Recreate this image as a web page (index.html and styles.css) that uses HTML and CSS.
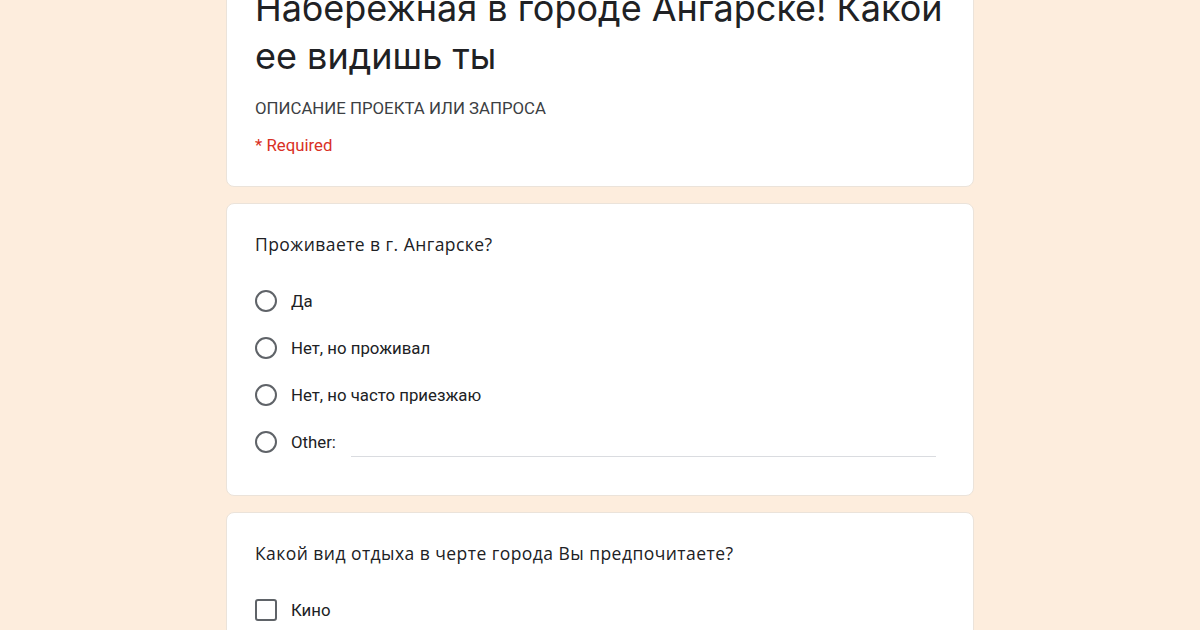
FILE: index.html
```html
<!DOCTYPE html>
<html lang="ru">
<head>
  <meta charset="UTF-8" />
  <meta name="viewport" content="width=device-width, initial-scale=1" />
  <title>Набережная в городе Ангарске</title>
  <link rel="stylesheet" href="styles.css">
</head>
<body>
  <div class="form">

    <!-- Header card -->
    <div class="card header-card">
      <h1 class="form-title">Набережная в городе Ангарске! Какой ее видишь ты</h1>
      <div class="form-desc">ОПИСАНИЕ ПРОЕКТА ИЛИ ЗАПРОСА</div>
      <div class="required-note">* Required</div>
    </div>

    <!-- Question 1 -->
    <div class="card question">
      <div class="question-title">Проживаете в г. Ангарске?</div>
      <div class="options">
        <label class="option">
          <span class="radio"></span>
          <span class="option-label">Да</span>
        </label>
        <label class="option">
          <span class="radio"></span>
          <span class="option-label">Нет, но проживал</span>
        </label>
        <label class="option">
          <span class="radio"></span>
          <span class="option-label">Нет, но часто приезжаю</span>
        </label>
        <label class="option">
          <span class="radio"></span>
          <span class="option-label">Other:</span>
          <span class="other-input"></span>
        </label>
      </div>
    </div>

    <!-- Question 2 -->
    <div class="card question">
      <div class="question-title">Какой вид отдыха в черте города Вы предпочитаете?</div>
      <div class="options">
        <label class="option">
          <span class="checkbox"></span>
          <span class="option-label">Кино</span>
        </label>
      </div>
    </div>

  </div>
</body>
</html>
```

FILE: styles.css
```css
body {
  background-color: #fdeddd;
  margin: 0;
  padding: 0;
  font-family: 'Roboto', 'Liberation Sans', sans-serif;
  color: #202124;
  overflow: hidden;
  height: 630px;
}

.form {
  width: 748px;
  margin: -45px auto 0 auto;
  display: flex;
  flex-direction: column;
  gap: 16px;
}

.card {
  background: #fff;
  border: 1px solid #ebe3da;
  border-radius: 8px;
  padding: 28px;
  box-sizing: border-box;
}

.header-card {
  padding-bottom: 29px;
}

.form-title {
  font-family: 'Inter', 'Open Sans', sans-serif;
  font-weight: 400;
  font-size: 36px;
  line-height: 48px;
  margin: 0;
  color: #202124;
}

.form-desc {
  margin-top: 16px;
  font-size: 16.8px;
  line-height: 24px;
  color: #3c4043;
}

.required-note {
  margin-top: 13px;
  font-size: 16.8px;
  line-height: 24px;
  color: #d93025;
}

.question {
  padding-top: 26px;
  padding-bottom: 33px;
}

.question-title {
  font-family: 'Open Sans', 'Roboto', sans-serif;
  font-size: 17.5px;
  line-height: 28px;
  letter-spacing: 0.45px;
}

.options {
  margin-top: 23px;
  display: flex;
  flex-direction: column;
  gap: 7px;
}

.option {
  display: flex;
  align-items: center;
  height: 40px;
  font-size: 16.8px;
}

.radio {
  width: 22px;
  height: 22px;
  border: 2px solid #5f6368;
  border-radius: 50%;
  box-sizing: border-box;
  flex-shrink: 0;
}

.checkbox {
  width: 22px;
  height: 22px;
  border: 2px solid #5f6368;
  border-radius: 3px;
  box-sizing: border-box;
  flex-shrink: 0;
}

.option-label {
  margin-left: 14px;
  color: #202124;
}

.other-input {
  flex: 1;
  margin-left: 15px;
  margin-right: 9px;
  align-self: flex-end;
  margin-bottom: 5px;
  border-bottom: 1px solid #dadce0;
}
```
